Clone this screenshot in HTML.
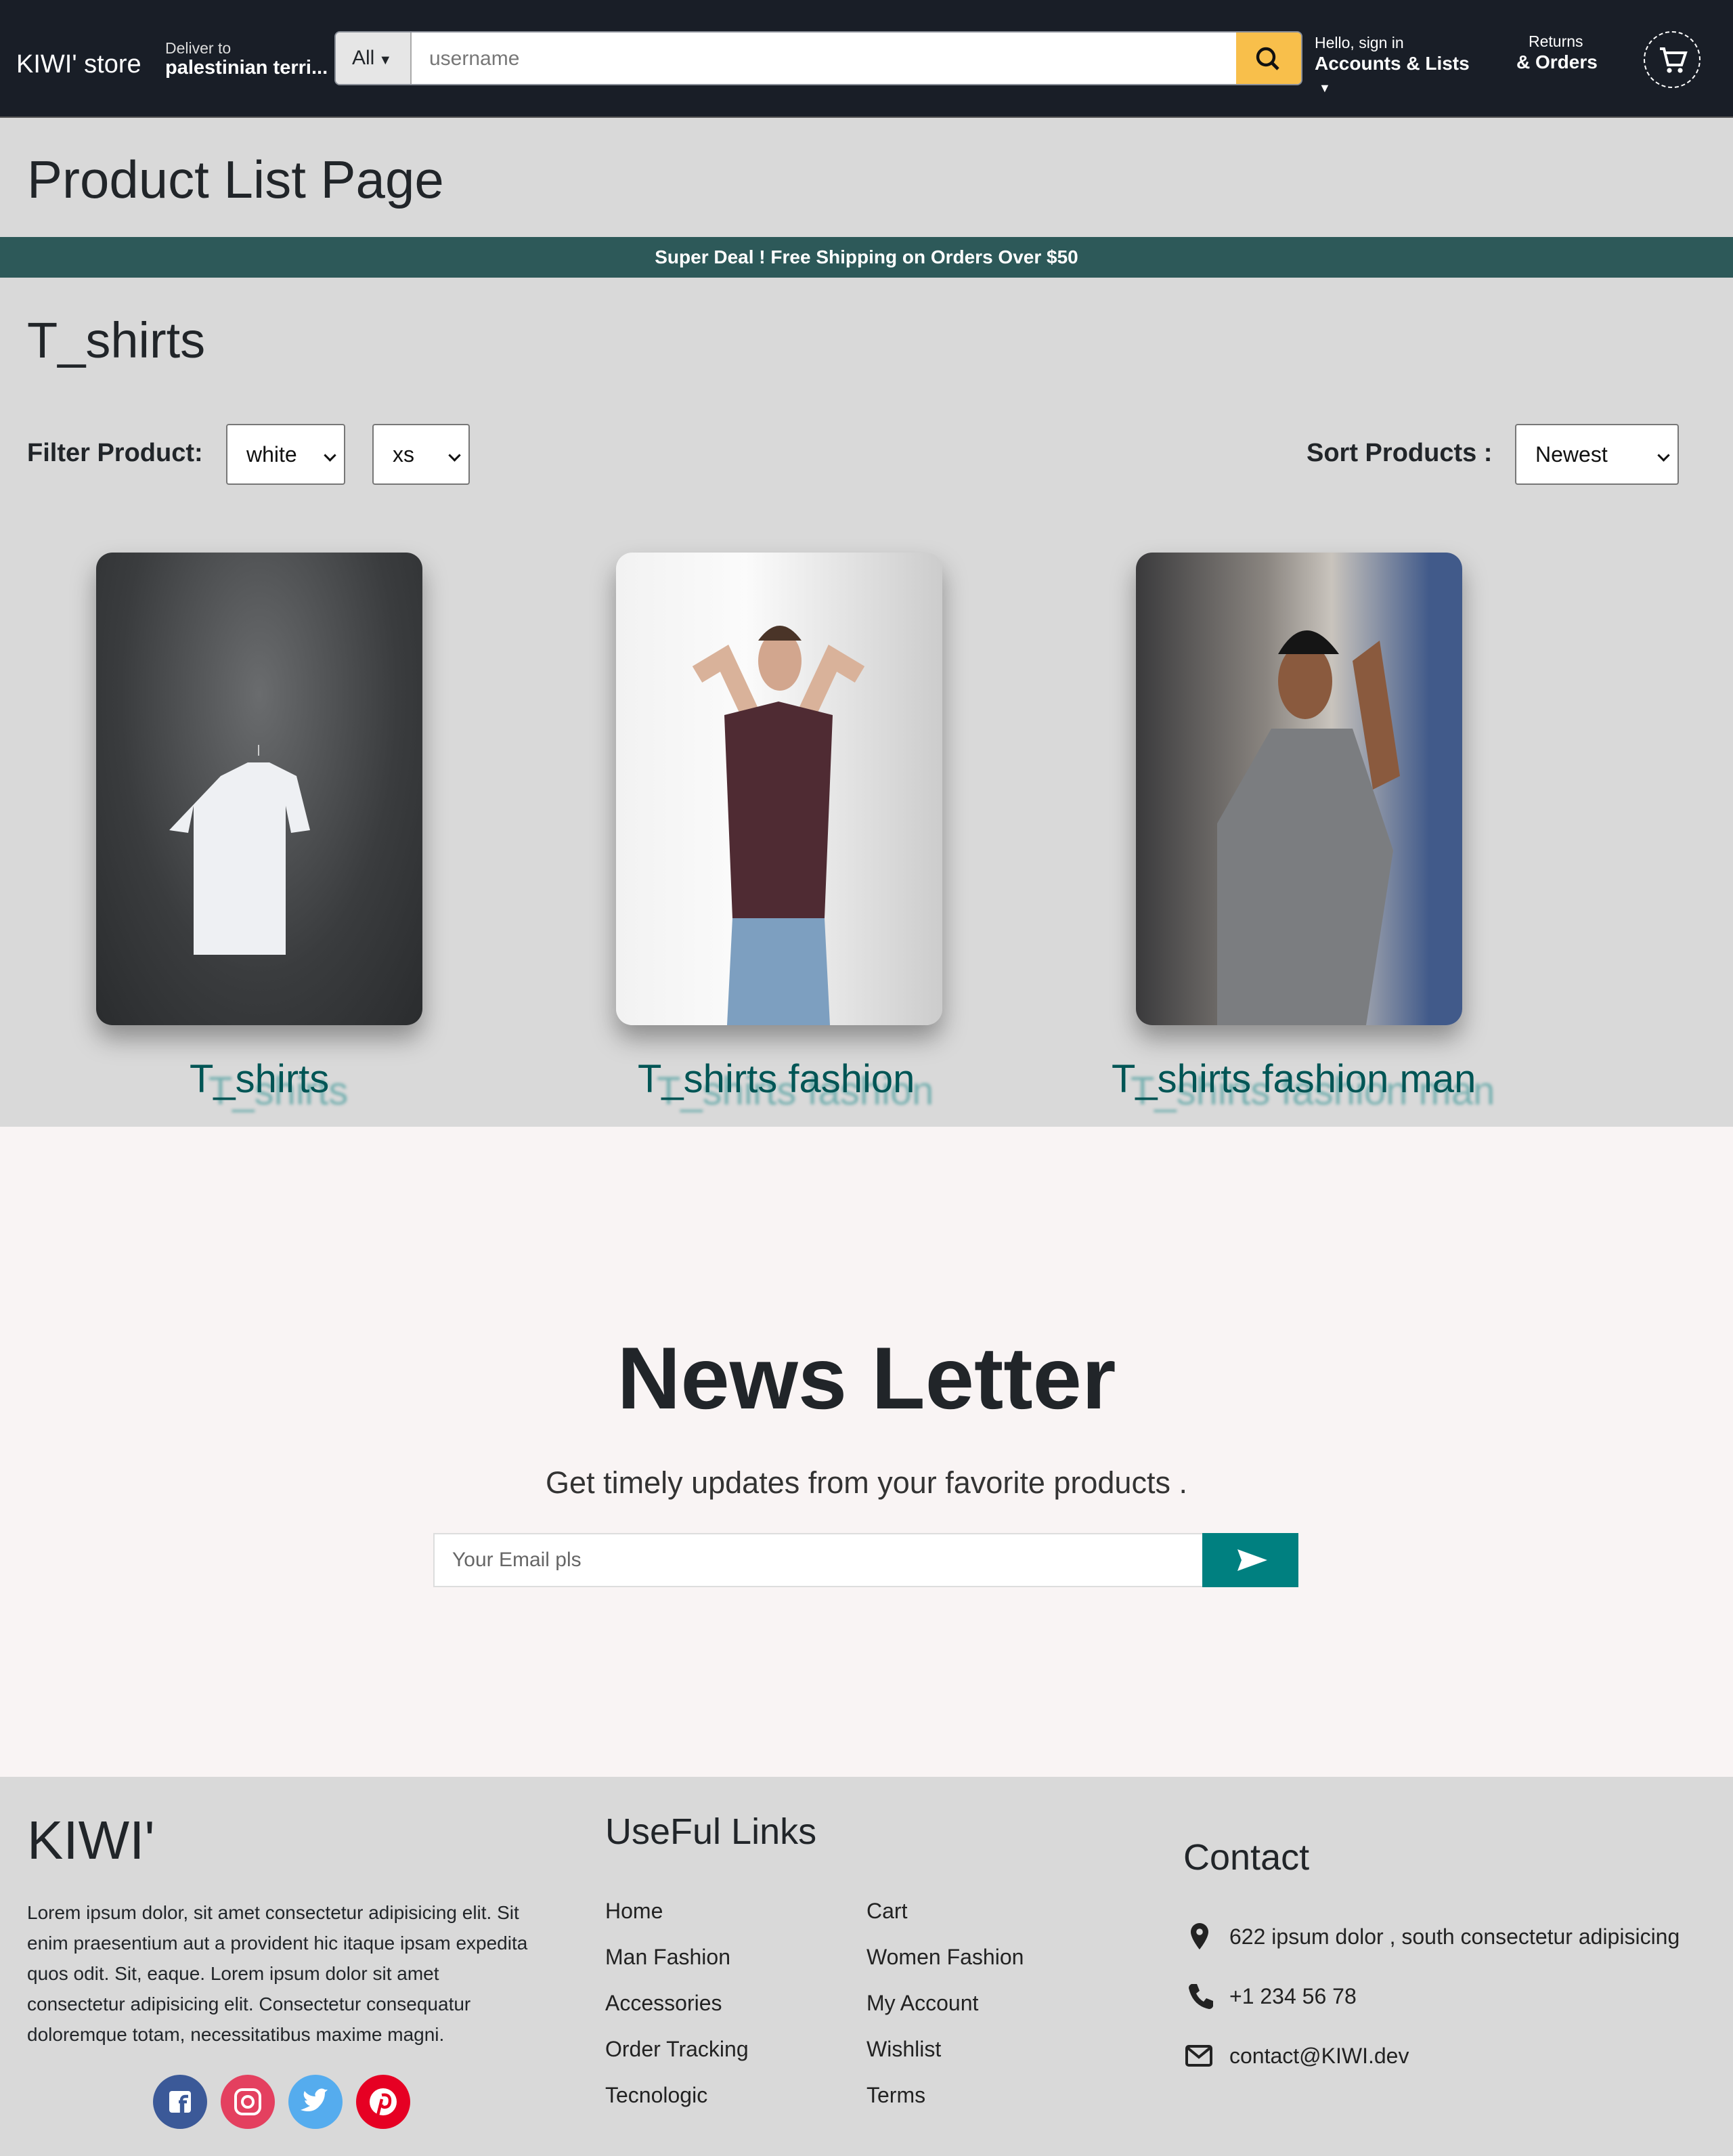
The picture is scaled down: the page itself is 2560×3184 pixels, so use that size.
<!DOCTYPE html>
<html><head><meta charset="utf-8"><style>
html{zoom:2}
*{box-sizing:border-box;margin:0;padding:0}
body{width:1280px;height:1592px;overflow:hidden;font-family:"Liberation Sans",sans-serif;background:#d9d9d9;color:#212529;position:relative}
.a{position:absolute;white-space:nowrap}
.hdr{position:absolute;left:0;top:0;width:1280px;height:87px;background:#191e27;border-bottom:1px solid #555}
.w{color:#fff}
.sel{position:absolute;background:#fff;border:1px solid #777;border-radius:2px;font-size:16px;color:#111;height:45px;line-height:43px;padding-left:14px}
.sel:after{content:"";position:absolute;right:7px;top:19px;width:5px;height:5px;border-right:1.6px solid #111;border-bottom:1.6px solid #111;transform:rotate(45deg)}
.card{position:absolute;top:408px;width:241px;height:349px;border-radius:12px;overflow:hidden;box-shadow:0 10px 18px rgba(0,0,0,.35)}
.pt{position:absolute;top:780px;font-size:29px;color:#005555;white-space:nowrap;text-shadow:14px 9px 2px rgba(0,128,128,.45)}
.lk{position:absolute;font-size:16px;color:#222}
</style></head><body>
<div class="hdr">
 <div class="a w" style="left:12px;top:37px;font-size:19px">KIWI' store</div>
 <div class="a" style="left:122px;top:29px;font-size:11.5px;color:#ddd">Deliver to</div>
 <div class="a w" style="left:122px;top:42px;font-size:14.5px;font-weight:bold">palestinian terri...</div>
 <div class="a" style="left:247px;top:23px;width:715px;height:40px;background:#fff;border-radius:4px;overflow:hidden;border:1px solid #8a8f98">
  <div class="a" style="left:0;top:0;width:56px;height:40px;background:#e6e6e6;border-right:1px solid #aaa;font-size:15px;line-height:38px;padding-left:12px">All<span style="font-size:10px;margin-left:3px">▼</span></div>
  <div class="a" style="left:69px;top:11px;font-size:15px;color:#777">username</div>
  <div class="a" style="right:0;top:0;width:48px;height:40px;background:#f8bf4b">
   <svg width="48" height="40"><circle cx="22" cy="18" r="6" fill="none" stroke="#111" stroke-width="2.2"/><line x1="26.5" y1="22.5" x2="31" y2="27" stroke="#111" stroke-width="2.4"/></svg>
  </div>
 </div>
 <div class="a w" style="left:971px;top:25px;font-size:11.5px">Hello, sign in</div>
 <div class="a w" style="left:971px;top:39px;font-size:14px;font-weight:bold">Accounts &amp; Lists</div>
 <div class="a w" style="left:974px;top:60px;font-size:9px">▼</div>
 <div class="a w" style="left:1129px;top:24px;font-size:11.5px">Returns</div>
 <div class="a w" style="left:1120px;top:38px;font-size:14px;font-weight:bold">&amp; Orders</div>
 <div class="a" style="left:1214px;top:23px;width:42px;height:42px;border:1px dashed #fff;border-radius:50%">
  <svg width="40" height="40" viewBox="0 0 40 40"><path d="M11 12h3l3 12h10l3-9H15" fill="none" stroke="#fff" stroke-width="2"/><circle cx="18" cy="28" r="1.8" fill="#fff"/><circle cx="26" cy="28" r="1.8" fill="#fff"/></svg>
 </div>
</div>
<div class="a" style="left:20px;top:110px;font-size:39px">Product List Page</div>
<div class="a" style="left:0;top:175px;width:1280px;height:30px;background:#2d5959;color:#fff;font-size:14px;font-weight:bold;text-align:center;line-height:30px">Super Deal ! Free Shipping on Orders Over $50</div>
<div class="a" style="left:20px;top:230px;font-size:37px">T_shirts</div>
<div class="a" style="left:20px;top:324px;font-size:19px;font-weight:bold">Filter Product:</div>
<div class="sel" style="left:167px;top:313px;width:88px">white</div>
<div class="sel" style="left:275px;top:313px;width:72px">xs</div>
<div class="a" style="left:965px;top:324px;font-size:19px;font-weight:bold">Sort Products :</div>
<div class="sel" style="left:1119px;top:313px;width:121px">Newest</div>

<div class="card" style="left:71px;background:radial-gradient(ellipse at 50% 30%,#6a6c6e,#3a3c3e 60%,#2a2c2e)">
 <svg width="241" height="349"><path d="M120 150v-8" stroke="#ccc"/><path d="M92 165l20-10h16l20 10 10 40-14 2-4-20v110h-68v-110l-4 20-14-2z" fill="#eef0f3"/></svg>
</div>
<div class="card" style="left:455px;background:linear-gradient(90deg,#f2f2f2,#fbfbfb 40%,#ccc)">
 <svg width="241" height="349"><path d="M60 90l20-12 28 60M180 90l-20-12-28 60" stroke="#d9b29a" stroke-width="14" fill="none"/><ellipse cx="121" cy="80" rx="16" ry="22" fill="#d2a68e"/><path d="M105 65q16-22 32 0" fill="#4a3428"/><path d="M80 120l40-10 40 10-6 150h-68z" fill="#4f2b33"/><path d="M86 270h68l4 79h-76z" fill="#7d9fc0"/></svg>
</div>
<div class="card" style="left:839px;background:linear-gradient(90deg,#3a3a3c,#8a8580 40%,#c9c4bd 60%,#415a8a 90%)">
 <svg width="241" height="349"><ellipse cx="125" cy="95" rx="20" ry="28" fill="#8a5a3e"/><path d="M105 75q20-35 45 0" fill="#151515"/><path d="M60 200l40-70 60 0 30 90-20 129h-110z" fill="#7b7d80"/><path d="M160 80l20-15 15 100-20 10z" fill="#8a5a3e"/></svg>
</div>
<div class="pt" style="left:140px">T_shirts</div>
<div class="pt" style="left:471px">T_shirts fashion</div>
<div class="pt" style="left:821px">T_shirts fashion man</div>

<div class="a" style="left:0;top:832px;width:1280px;height:480px;background:#f9f4f4">
 <div class="a" style="left:0;width:1280px;top:148px;text-align:center;font-size:65px;font-weight:bold">News Letter</div>
 <div class="a" style="left:0;width:1280px;top:250px;text-align:center;font-size:22.5px;color:#333">Get timely updates from your favorite products .</div>
 <div class="a" style="left:320px;top:300px;width:570px;height:40px;background:#fff;border:1px solid #ddd;font-size:15px;color:#666;line-height:38px;padding-left:13px">Your Email pls</div>
 <div class="a" style="left:888px;top:300px;width:71px;height:40px;background:#008080">
  <svg width="71" height="40"><path d="M26 12l22 8-22 8 3-8z" fill="#fff"/></svg>
 </div>
</div>

<div class="a" style="left:20px;top:1336px;font-size:40px">KIWI'</div>
<div class="a" style="left:20px;top:1401px;font-size:14px;line-height:22.5px;white-space:normal;width:372px">Lorem ipsum dolor, sit amet consectetur adipisicing elit. Sit enim praesentium aut a provident hic itaque ipsam expedita quos odit. Sit, eaque. Lorem ipsum dolor sit amet consectetur adipisicing elit. Consectetur consequatur doloremque totam, necessitatibus maxime magni.</div>
<svg class="a" style="left:112px;top:1531px" width="196" height="42">
 <circle cx="21" cy="21" r="20" fill="#3b5998"/><rect x="13" y="13" width="16" height="16" rx="2" fill="#fff"/><path d="M23 29v-8h3M20 21h6M22 29v-9q0-3 3-3h2" stroke="#3b5998" stroke-width="2.2" fill="none"/>
 <circle cx="71" cy="21" r="20" fill="#e4405f"/><rect x="62" y="12" width="18" height="18" rx="5" fill="none" stroke="#fff" stroke-width="2"/><circle cx="71" cy="21" r="4" fill="none" stroke="#fff" stroke-width="2"/>
 <circle cx="121" cy="21" r="20" fill="#55acee"/><path d="M110 27q9 3 14-3 4-4 4-10l2-2-2 0q-3-2-6 1-2 2-1 4-5 0-8-4-2 4 2 7h-2q1 3 4 4-4 2-7 3z" fill="#fff"/>
 <circle cx="171" cy="21" r="20" fill="#e60023"/><circle cx="171" cy="21" r="10" fill="#fff"/><path d="M170 16q6-1 6 4 0 5-4 5-2 0-2-2M170 19l-3 12" stroke="#e60023" stroke-width="2.2" fill="none"/>
</svg>

<div class="a" style="left:447px;top:1337px;font-size:27px">UseFul Links</div>
<div class="lk" style="left:447px;top:1402px">Home</div><div class="lk" style="left:640px;top:1402px">Cart</div>
<div class="lk" style="left:447px;top:1436px">Man Fashion</div><div class="lk" style="left:640px;top:1436px">Women Fashion</div>
<div class="lk" style="left:447px;top:1470px">Accessories</div><div class="lk" style="left:640px;top:1470px">My Account</div>
<div class="lk" style="left:447px;top:1504px">Order Tracking</div><div class="lk" style="left:640px;top:1504px">Wishlist</div>
<div class="lk" style="left:447px;top:1538px">Tecnologic</div><div class="lk" style="left:640px;top:1538px">Terms</div>

<div class="a" style="left:874px;top:1356px;font-size:27px">Contact</div>
<svg class="a" style="left:876px;top:1419px" width="20" height="22"><path d="M10 1a6.5 6.5 0 0 1 6.5 6.5c0 5-6.5 13-6.5 13s-6.5-8-6.5-13A6.5 6.5 0 0 1 10 1z" fill="#222"/><circle cx="10" cy="7.5" r="2.4" fill="#d9d9d9"/></svg>
<div class="lk" style="left:908px;top:1421px">622 ipsum dolor , south consectetur adipisicing</div>
<svg class="a" style="left:876px;top:1463px" width="20" height="22"><path d="M4 2l4 0 2 5-2.5 2q2 4 5.5 6l2-2.5 5 2v4q-1 2-3 2Q5 18 2 5q0-2 2-3z" fill="#222"/></svg>
<div class="lk" style="left:908px;top:1465px">+1 234 56 78</div>
<svg class="a" style="left:875px;top:1508px" width="22" height="20"><rect x="1.5" y="3" width="18" height="14" rx="1.5" fill="none" stroke="#222" stroke-width="2"/><path d="M2 4l8.5 7 8.5-7" fill="none" stroke="#222" stroke-width="2"/></svg>
<div class="lk" style="left:908px;top:1509px">contact@KIWI.dev</div>
</body></html>
